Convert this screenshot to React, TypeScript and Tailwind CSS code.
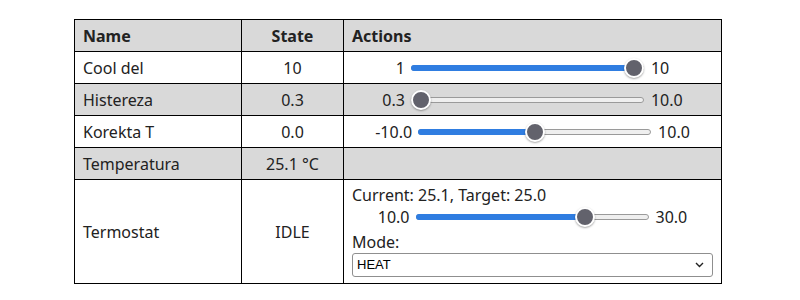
import React from "react";

type SliderProps = { min: number; max: number; value: number; minLabel: string; maxLabel: string };

const W = 233;
const T = 20;

function Slider({ min, max, value, minLabel, maxLabel }: SliderProps) {
  const frac = (value - min) / (max - min);
  const left = frac * (W - T);
  return (
    <div className="flex items-center justify-center">
      <span>{minLabel}</span>
      <div className="relative ml-[6px] mr-[7px] flex h-[20px] w-[233px] items-center">
        <div className="h-[6px] w-full rounded-full border border-[#9a9a9a] bg-[#efefef]" />
        {frac > 0 && (
          <div
            className="absolute left-0 top-[7px] h-[6px] rounded-full bg-[#2f7de1]"
            style={{ width: left + T / 2 }}
          />
        )}
        <div
          className="absolute top-0 h-[20px] w-[20px] rounded-full border-2 border-white bg-[#62626c] shadow-[0_1px_2px_rgba(0,0,0,0.35)]"
          style={{ left }}
        />
      </div>
      <span>{maxLabel}</span>
    </div>
  );
}

function Cell({ children, className = "" }: { children?: React.ReactNode; className?: string }) {
  return <div className={`flex items-center border-b border-r border-black ${className}`}>{children}</div>;
}

export default function App() {
  const gray = "bg-[#d9d9d9]";
  return (
    <div
      className="min-h-[300px] w-[800px] bg-white pl-[74px] pt-[19px] text-[16px] leading-[22px] text-[#222]"
      style={{ fontFamily: '"Noto Sans", "Open Sans", sans-serif' }}
    >
      <div className="grid w-[648px] grid-cols-[167px_102px_378px] border-l border-t border-black">
        <Cell className={`h-[32px] px-2 font-bold ${gray}`}>Name</Cell>
        <Cell className={`h-[32px] justify-center font-bold ${gray}`}>State</Cell>
        <Cell className={`h-[32px] px-2 font-bold ${gray}`}>Actions</Cell>

        <Cell className="h-[32px] px-2">Cool del</Cell>
        <Cell className="h-[32px] justify-center">10</Cell>
        <Cell className="h-[32px] justify-center">
          <Slider min={1} max={10} value={10} minLabel="1" maxLabel="10" />
        </Cell>

        <Cell className={`h-[32px] px-2 ${gray}`}>Histereza</Cell>
        <Cell className={`h-[32px] justify-center ${gray}`}>0.3</Cell>
        <Cell className={`h-[32px] justify-center ${gray}`}>
          <Slider min={0.3} max={10} value={0.3} minLabel="0.3" maxLabel="10.0" />
        </Cell>

        <Cell className="h-[32px] px-2">Korekta T</Cell>
        <Cell className="h-[32px] justify-center">0.0</Cell>
        <Cell className="h-[32px] justify-center">
          <Slider min={-10} max={10} value={0} minLabel="-10.0" maxLabel="10.0" />
        </Cell>

        <Cell className={`h-[32px] px-2 ${gray}`}>Temperatura</Cell>
        <Cell className={`h-[32px] justify-center ${gray}`}>25.1 °C</Cell>
        <Cell className={`h-[32px] ${gray}`} />

        <Cell className="h-[104px] px-2">Termostat</Cell>
        <Cell className="h-[104px] justify-center">IDLE</Cell>
        <div className="flex h-[104px] flex-col border-b border-r border-black px-2 pb-[5px] pt-[4px]">
          <div className="h-[22px]">Current: 25.1, Target: 25.0</div>
          <div className="h-[22px]">
            <Slider min={10} max={30} value={25} minLabel="10.0" maxLabel="30.0" />
          </div>
          <div className="mt-[3px] h-[22px]">Mode:</div>
          <div
            className="flex h-[24px] items-center justify-between rounded-[3px] border border-[#8f8f8f] bg-white pl-[4px] pr-[8px] text-[13px] text-black"
            style={{ fontFamily: '"Liberation Sans", Arial, sans-serif' }}
          >
            <span>HEAT</span>
            <svg width="9" height="6" viewBox="0 0 9 6" fill="none">
              <path d="M1 1l3.5 3.5L8 1" stroke="#222" strokeWidth="1.4" />
            </svg>
          </div>
        </div>
      </div>
    </div>
  );
}
